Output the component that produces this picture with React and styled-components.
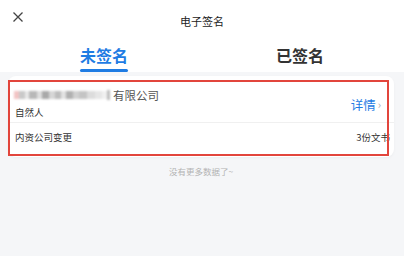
import React from "react";
import styled, { createGlobalStyle } from "styled-components";

const GlobalStyle = createGlobalStyle`
  body {
    margin: 0;
    background: #f5f6f8;
    font-family: "Noto Sans CJK SC", "Noto Sans", sans-serif;
  }
`;

const Page = styled.div`
  width: 404px;
  height: 256px;
  overflow: hidden;
  background: #f5f6f8;
`;

const Header = styled.div`
  background: #fff;
`;

const TopBar = styled.div`
  position: relative;
  height: 36px;
  display: flex;
  align-items: center;
  justify-content: center;
`;

const CloseBtn = styled.div`
  position: absolute;
  left: 13px;
  top: 12px;
  width: 10px;
  height: 10px;
  display: flex;
`;

const Title = styled.div`
  font-size: 11px;
  color: #222;
  padding-top: 5px;
`;

const Tabs = styled.div`
  display: flex;
  padding: 0 6px;
  height: 36px;
`;

const Tab = styled.div`
  flex: 1;
  display: flex;
  flex-direction: column;
  align-items: center;
`;

const TabLabel = styled.div`
  padding-top: 9px;
  line-height: 20px;
  font-size: 16px;
  font-weight: 700;
  color: ${(p) => (p.active ? "#1f7ce3" : "#333")};
`;

const Underline = styled.div`
  margin-top: 4px;
  width: 48px;
  height: 3px;
  border-radius: 2px;
  background: ${(p) => (p.active ? "#1f7ce3" : "transparent")};
`;

const Content = styled.div`
  padding: 4px 10px 0 8px;
`;

const Card = styled.div`
  position: relative;
  background: #fff;
  border-radius: 8px;
  padding-bottom: 6px;
  box-shadow: 0 1px 3px rgba(0, 0, 0, 0.04);
`;

const Highlight = styled.div`
  position: absolute;
  left: 0;
  top: 4px;
  width: 381px;
  height: 76px;
  box-sizing: border-box;
  border: 2px solid #e2453c;
  pointer-events: none;
`;

const MainRow = styled.div`
  display: flex;
  justify-content: space-between;
  height: 47px;
  padding: 11px 13px 0 6px;
  box-sizing: border-box;
  border-bottom: 1px solid #f0f0f0;
`;

const NameCol = styled.div`
  display: flex;
  flex-direction: column;
  gap: 2px;
`;

const NameLine = styled.div`
  display: flex;
  align-items: center;
  height: 16px;
  font-size: 11.5px;
  color: #555;
`;

const Mosaic = styled.div`
  display: flex;
  align-items: center;
  height: 10px;
  margin-right: 3px;
  filter: blur(0.8px);
`;

const Tile = styled.span`
  display: block;
  width: ${(p) => p.w}px;
  height: ${(p) => p.h || 8}px;
  background: ${(p) => p.c};
`;

const SubText = styled.div`
  padding-left: 1px;
  font-size: 9.5px;
  line-height: 14px;
  color: #333;
`;

const Detail = styled.div`
  display: flex;
  align-items: center;
  margin-top: 9px;
  height: 16px;
  font-size: 12.5px;
  color: #1f7ce3;
`;

const Chevron = styled.span`
  margin-left: 2px;
  font-size: 11px;
  color: #aaa;
`;

const InfoRow = styled.div`
  display: flex;
  justify-content: space-between;
  align-items: center;
  height: 28px;
  padding: 0 4px 0 7px;
  font-size: 9.5px;
  color: #333;
`;

const Footer = styled.div`
  margin-top: 8px;
  text-align: center;
  font-size: 8.5px;
  line-height: 12px;
  color: #b3b3b3;
`;

const tiles = [
  { w: 5, c: "#f2c4c4" },
  { w: 6, c: "#c9c9c9" },
  { w: 4, c: "#e8e8e8" },
  { w: 8, c: "#b8b8b8" },
  { w: 5, c: "#dedede" },
  { w: 7, c: "#a9a9a9" },
  { w: 6, c: "#d6d6d6" },
  { w: 6, c: "#bdbdbd" },
  { w: 5, c: "#e2e2e2" },
  { w: 7, c: "#b0b0b0" },
  { w: 6, c: "#d0d0d0" },
  { w: 8, c: "#c4c4c4" },
  { w: 8, c: "#dcdcdc" },
  { w: 7, c: "#e6e6e6" },
  { w: 5, c: "#f0f0f0" },
  { w: 3, c: "#bdbdbd", h: 10 },
];

export default function App() {
  return (
    <Page>
      <GlobalStyle />
      <Header>
        <TopBar>
          <CloseBtn>
            <svg width="10" height="10" viewBox="0 0 10 10">
              <path d="M0.5 0.5L9.5 9.5M9.5 0.5L0.5 9.5" stroke="#444" strokeWidth="1.3" />
            </svg>
          </CloseBtn>
          <Title>电子签名</Title>
        </TopBar>
        <Tabs>
          <Tab>
            <TabLabel active>未签名</TabLabel>
            <Underline active />
          </Tab>
          <Tab>
            <TabLabel>已签名</TabLabel>
            <Underline />
          </Tab>
        </Tabs>
      </Header>
      <Content>
        <Card>
          <MainRow>
            <NameCol>
              <NameLine>
                <Mosaic>
                  {tiles.map((t, i) => (
                    <Tile key={i} w={t.w} c={t.c} h={t.h} />
                  ))}
                </Mosaic>
                有限公司
              </NameLine>
              <SubText>自然人</SubText>
            </NameCol>
            <Detail>
              详情<Chevron>›</Chevron>
            </Detail>
          </MainRow>
          <InfoRow>
            <span>内资公司变更</span>
            <span>3份文书</span>
          </InfoRow>
          <Highlight />
        </Card>
        <Footer>没有更多数据了~</Footer>
      </Content>
    </Page>
  );
}
